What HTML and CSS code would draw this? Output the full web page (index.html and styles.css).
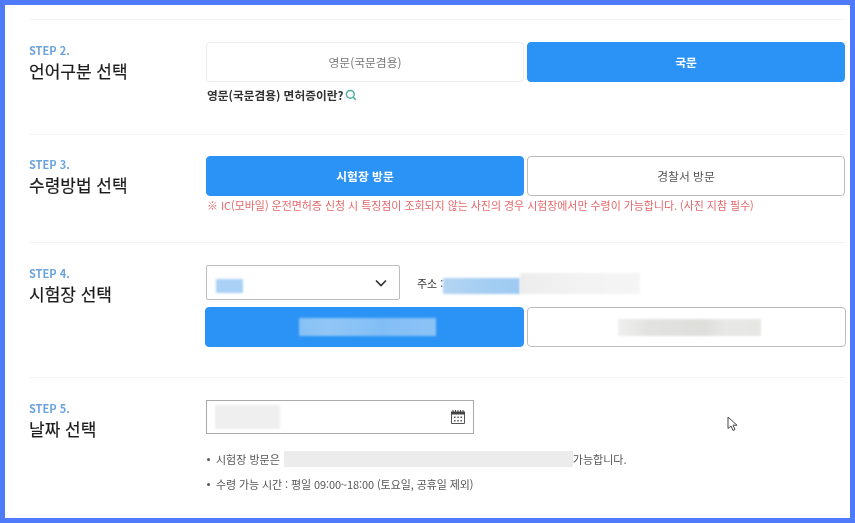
FILE: index.html
```html
<!DOCTYPE html>
<html lang="ko">
<head>
<meta charset="utf-8">
<title>면허증 신청</title>
<link rel="stylesheet" href="styles.css">
</head>
<body>
<main class="frame">
  <section class="step step-language">
    <div class="label"><p class="step-no">STEP 2.</p><h2 class="step-title">언어구분 선택</h2></div>
    <div class="body">
      <div class="choices">
        <button class="choice choice-faint">영문(국문겸용)</button>
        <button class="choice active">국문</button>
      </div>
      <p class="help">영문(국문겸용) 면허증이란?
        <svg class="search" viewBox="0 0 12 12" width="12" height="12"><circle cx="5.3" cy="5.3" r="3.9" fill="none" stroke="#4fb09c" stroke-width="1.5"/><path d="M8 8l3 3" stroke="#4fb09c" stroke-width="1.6"/></svg>
      </p>
    </div>
  </section>
  <section class="step step-method">
    <div class="label"><p class="step-no">STEP 3.</p><h2 class="step-title">수령방법 선택</h2></div>
    <div class="body">
      <div class="choices">
        <button class="choice active">시험장 방문</button>
        <button class="choice choice-strong">경찰서 방문</button>
      </div>
      <p class="warning">※ IC(모바일) 운전면허증 신청 시 특징점이 조회되지 않는 사진의 경우 시험장에서만 수령이 가능합니다. (사진 지참 필수)</p>
    </div>
  </section>
  <section class="step step-place">
    <div class="label"><p class="step-no">STEP 4.</p><h2 class="step-title">시험장 선택</h2></div>
    <div class="body">
      <div class="place-row">
        <div class="select">
          <span class="blur blur-select"></span>
          <svg viewBox="0 0 12 8" width="12" height="8"><path d="M1 1.5l5 5 5-5" fill="none" stroke="#333" stroke-width="1.7"/></svg>
        </div>
        <span class="address">주소 :</span>
        <span class="blur blur-addr-blue"></span><span class="blur blur-addr-grey"></span>
      </div>
      <div class="choices choices-wide">
        <button class="choice active"><span class="blur blur-center-blue"></span></button>
        <button class="choice choice-strong"><span class="blur blur-center-grey"></span></button>
      </div>
    </div>
  </section>
  <section class="step step-date">
    <div class="label"><p class="step-no">STEP 5.</p><h2 class="step-title">날짜 선택</h2></div>
    <div class="body">
      <div class="date">
        <span class="blur blur-date"></span>
        <svg viewBox="0 0 16 16" width="16" height="16"><path d="M1 2.5h14v3H1z" fill="#444"/><path d="M3 1v2M5.5 1v2M8 1v2M10.500 1v2M13 1v2" stroke="#444" stroke-width="1"/><path d="M1.500 5v9.500h13V5" fill="none" stroke="#555" stroke-width="1"/><path d="M4 7.500h1.500v1.500H4zM7.300 7.500h1.500v1.500H7.300zM10.500 7.500H12v1.500h-1.500zM4 11h1.500v1.500H4zM7.300 11h1.500v1.500H7.300zM10.500 11H12v1.500h-1.500z" fill="#555"/></svg>
      </div>
      <ul class="notes">
        <li>시험장 방문은 <span class="blur blur-note"></span>가능합니다.</li>
        <li class="note-hours">수령 가능 시간 : 평일 09:00~18:00 (토요일, 공휴일 제외)</li>
      </ul>
    </div>
  </section>
  <svg class="cursor" viewBox="0 0 12 16" width="12" height="16"><path d="M1 1v11.500l3-2.500 2 4.500 2-1-2-4.300h4z" fill="#fff" stroke="#444" stroke-width="1"/></svg>
</main>
</body>
</html>
```
FILE: styles.css
```css
* { box-sizing: border-box; }
html, body { margin: 0; padding: 0; }
body { width: 855px; height: 523px; overflow: hidden; background: #4f7bfb; }
.frame {
  position: relative;
  width: 855px;
  height: 523px;
  border: 5px solid #4f7bfb;
  padding-top: 14px;
  overflow: hidden;
  background: #fff;
  font-family: "Noto Sans CJK KR", "Noto Sans", sans-serif;
  color: #222;
  filter: blur(0.35px);
}
.step {
  display: grid;
  grid-template-columns: 177px 639px;
  width: 816px;
  margin-left: 24px;
  border-top: 1px solid #f3f3f3;
}
.step-language { height: 115px; padding-top: 22px; }
.step-method { height: 108px; padding-top: 21px; }
.step-place { height: 135px; padding-top: 22px; }
.step-date { padding-top: 22px; }
.step-no { margin: 0; font-size: 11px; line-height: 16px; font-weight: 700; color: #6ba3dc; }
.step-title { margin: 1px 0 0; font-size: 17px; line-height: 24px; font-weight: 400; color: #1c1c1c; -webkit-text-stroke: 0.2px #1c1c1c; }
.choices { display: grid; grid-template-columns: 318px 318px; gap: 3px; }
.choice {
  height: 40px;
  padding: 0;
  border: 1px solid #cfcfcf;
  border-radius: 4px;
  background: #fff;
  color: #555;
  font: 400 11.8px/1 "Noto Sans CJK KR", sans-serif;
  display: flex;
  align-items: center;
  justify-content: center;
}
.choice-faint { border-color: #ececec; color: #777; }
.choice-strong { border-color: #bcbcbc; }
.choice.active { background: #2a93f5; border-color: #2a93f5; color: #fff; font-weight: 700; }
.help { margin: 5px 0 0 1px; font-size: 11.7px; line-height: 16px; font-weight: 700; color: #333; display: flex; align-items: center; gap: 2px; }
.warning { margin: 1px 0 0 1px; font-size: 11px; line-height: 16px; letter-spacing: -0.06px; color: #e5686c; white-space: nowrap; }
.place-row { display: flex; align-items: center; height: 35px; }
.select {
  width: 194px;
  height: 35px;
  border: 1px solid #bdbdbd;
  border-radius: 2px;
  display: flex;
  align-items: center;
  justify-content: space-between;
  padding: 0 12px 0 9px;
}
.address { margin-left: 17px; width: 26px; font-size: 11px; color: #333; white-space: nowrap; overflow: hidden; }
.blur { display: inline-block; filter: blur(1px); }
.blur-select { width: 27px; height: 14px; margin-top: 6px; background: #a9d0f5; }
.blur-addr-blue { width: 77px; height: 16px; margin-top: 7px; background: linear-gradient(90deg, #b4d5f3, #a3cdf2 60%, #9fcaf1); }
.blur-addr-grey { width: 120px; height: 21px; margin-top: 2px; background: linear-gradient(90deg, #ececec, #f3f3f3 50%, #f5f5f5); }
.choices-wide { margin: 7px -1px 0; grid-template-columns: 319px 319px; }
.blur-center-blue { width: 137px; height: 18px; margin-left: 5px; background: linear-gradient(90deg, #85c0f6, #92c7f7 20%, #82bef6 60%, #8cc3f6); }
.blur-center-grey { width: 143px; height: 17px; margin-left: 5px; background: linear-gradient(90deg, #efefef, #e3e3e1 20%, #dededb 60%, #e8e8e7 75%, #e6e6e5); }
.date {
  width: 268px;
  height: 34px;
  border: 1px solid #aaa;
  display: flex;
  align-items: center;
  justify-content: space-between;
  padding: 0 7px 0 8px;
}
.blur-date { width: 65px; height: 24px; background: #efefef; }
.notes { margin: 17px 0 0; padding: 0 0 0 1px; list-style: none; font-size: 11px; line-height: 16px; color: #555; }
.notes li { display: flex; align-items: center; white-space: nowrap; height: 16px; margin-bottom: 9px; }
.notes li::before { content: ""; width: 3px; height: 3px; border-radius: 50%; background: #555; margin-right: 6px; flex: none; }
.note-hours { letter-spacing: -0.1px; }
.blur-note { width: 289px; height: 16px; margin-left: 4px; background: #ececec; filter: none; }
.cursor { position: absolute; left: 722px; top: 411px; }
```
